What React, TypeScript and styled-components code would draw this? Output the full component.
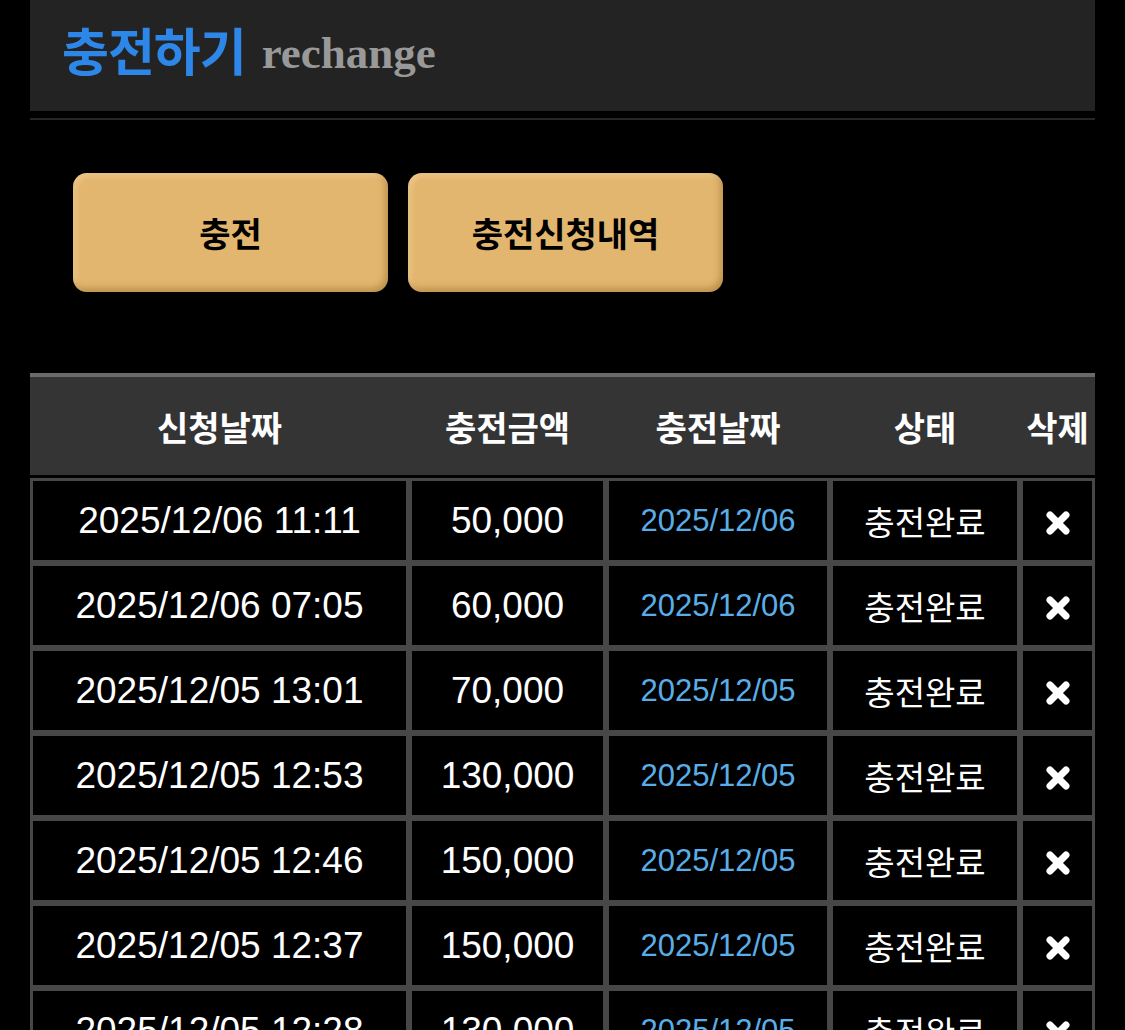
import React from 'react';
import styled, { createGlobalStyle } from 'styled-components';

const GlobalStyle = createGlobalStyle`
  html, body {
    margin: 0;
    padding: 0;
    background: #000;
  }
  body {
    font-family: "Liberation Sans", "Noto Sans CJK KR", sans-serif;
    color: #fff;
  }
`;

// heavy "x" used for the delete column
const DeleteIcon = () => (
  <svg width="26" height="26" viewBox="0 0 26 26">
    <g stroke="#fff" strokeWidth="7" strokeLinecap="round">
      <line x1="5" y1="5" x2="21" y2="21" />
      <line x1="21" y1="5" x2="5" y2="21" />
    </g>
  </svg>
);

const Page = styled.div`
  margin: 0 30px;
`;

const TitleBar = styled.header`
  height: 111px;
  background: #232323;
  display: flex;
  align-items: center;
  padding: 0 0 12px 32px;
  box-sizing: border-box;
  gap: 16px;
`;

const TitleKo = styled.h1`
  margin: 0;
  font-family: "Noto Sans CJK KR", sans-serif;
  font-size: 51px;
  font-weight: 700;
  line-height: 1;
  color: #2d87e8;
  letter-spacing: -1px;
`;

const TitleEn = styled.span`
  font-family: "Liberation Serif", serif;
  font-weight: 700;
  font-size: 45px;
  line-height: 1;
  color: #999;
  margin-top: 8px;
`;

const Divider = styled.div`
  height: 2px;
  background: #262626;
  margin-top: 7px;
`;

const ButtonRow = styled.div`
  display: flex;
  gap: 20px;
  padding: 53px 0 0 43px;
`;

const TabButton = styled.button`
  width: 315px;
  height: 119px;
  border: none;
  border-radius: 14px;
  background: #e3b66f;
  box-shadow:
    inset -3px -4px 6px rgba(120, 80, 20, 0.35),
    inset 3px 3px 5px rgba(255, 235, 190, 0.35);
  font-family: "Noto Sans CJK KR", sans-serif;
  font-size: 34px;
  font-weight: 700;
  color: #000;
  cursor: pointer;
`;

const Table = styled.table`
  width: 100%;
  margin-top: 81px;
  border-collapse: separate;
  border-spacing: 0;
  table-layout: fixed;
`;

const HeadCell = styled.th`
  height: 98px;
  padding: 0;
  background: #343434;
  border-top: 4px solid #6a6a6a;
  border-bottom: 3px solid #000;
  font-family: "Noto Sans CJK KR", sans-serif;
  font-size: 34px;
  font-weight: 700;
  color: #fff;
  text-align: center;
  vertical-align: middle;
  white-space: nowrap;
`;

const Cell = styled.td<{ $tone?: 'date' | 'status' }>`
  height: 79px;
  padding: 0;
  border: 3px solid #474747;
  background: #000;
  text-align: center;
  vertical-align: middle;
  white-space: nowrap;
  font-size: ${p => (p.$tone === 'date' ? '31px' : p.$tone === 'status' ? '33px' : '37px')};
  color: ${p => (p.$tone === 'date' ? '#5aaee8' : '#fff')};
  font-family: ${p =>
    p.$tone === 'status' ? '"Noto Sans CJK KR", sans-serif' : '"Liberation Sans", sans-serif'};
`;

const IconCell = styled.td`
  padding: 0;
  border: 3px solid #474747;
  text-align: center;
  vertical-align: middle;
  svg {
    display: block;
    margin: 4px auto 0;
  }
`;

interface Row {
  requested: string;
  amount: string;
  charged: string;
}

const rows: Row[] = [
  { requested: '2025/12/06 11:11', amount: '50,000', charged: '2025/12/06' },
  { requested: '2025/12/06 07:05', amount: '60,000', charged: '2025/12/06' },
  { requested: '2025/12/05 13:01', amount: '70,000', charged: '2025/12/05' },
  { requested: '2025/12/05 12:53', amount: '130,000', charged: '2025/12/05' },
  { requested: '2025/12/05 12:46', amount: '150,000', charged: '2025/12/05' },
  { requested: '2025/12/05 12:37', amount: '150,000', charged: '2025/12/05' },
  { requested: '2025/12/05 12:28', amount: '130,000', charged: '2025/12/05' },
];

const App: React.FC = () => (
  <>
    <GlobalStyle />
    <Page>
      <TitleBar>
        <TitleKo>충전하기</TitleKo>
        <TitleEn>rechange</TitleEn>
      </TitleBar>
      <Divider />

      <ButtonRow>
        <TabButton>충전</TabButton>
        <TabButton>충전신청내역</TabButton>
      </ButtonRow>

      <Table>
        <colgroup>
          <col style={{ width: 379 }} />
          <col style={{ width: 197 }} />
          <col style={{ width: 224 }} />
          <col style={{ width: 190 }} />
          <col style={{ width: 75 }} />
        </colgroup>
        <thead>
          <tr>
            <HeadCell>신청날짜</HeadCell>
            <HeadCell>충전금액</HeadCell>
            <HeadCell>충전날짜</HeadCell>
            <HeadCell>상태</HeadCell>
            <HeadCell>삭제</HeadCell>
          </tr>
        </thead>
        <tbody>
          {rows.map((r, i) => (
            <tr key={i}>
              <Cell>{r.requested}</Cell>
              <Cell>{r.amount}</Cell>
              <Cell $tone="date">{r.charged}</Cell>
              <Cell $tone="status">충전완료</Cell>
              <IconCell>
                <DeleteIcon />
              </IconCell>
            </tr>
          ))}
        </tbody>
      </Table>
    </Page>
  </>
);

export default App;
